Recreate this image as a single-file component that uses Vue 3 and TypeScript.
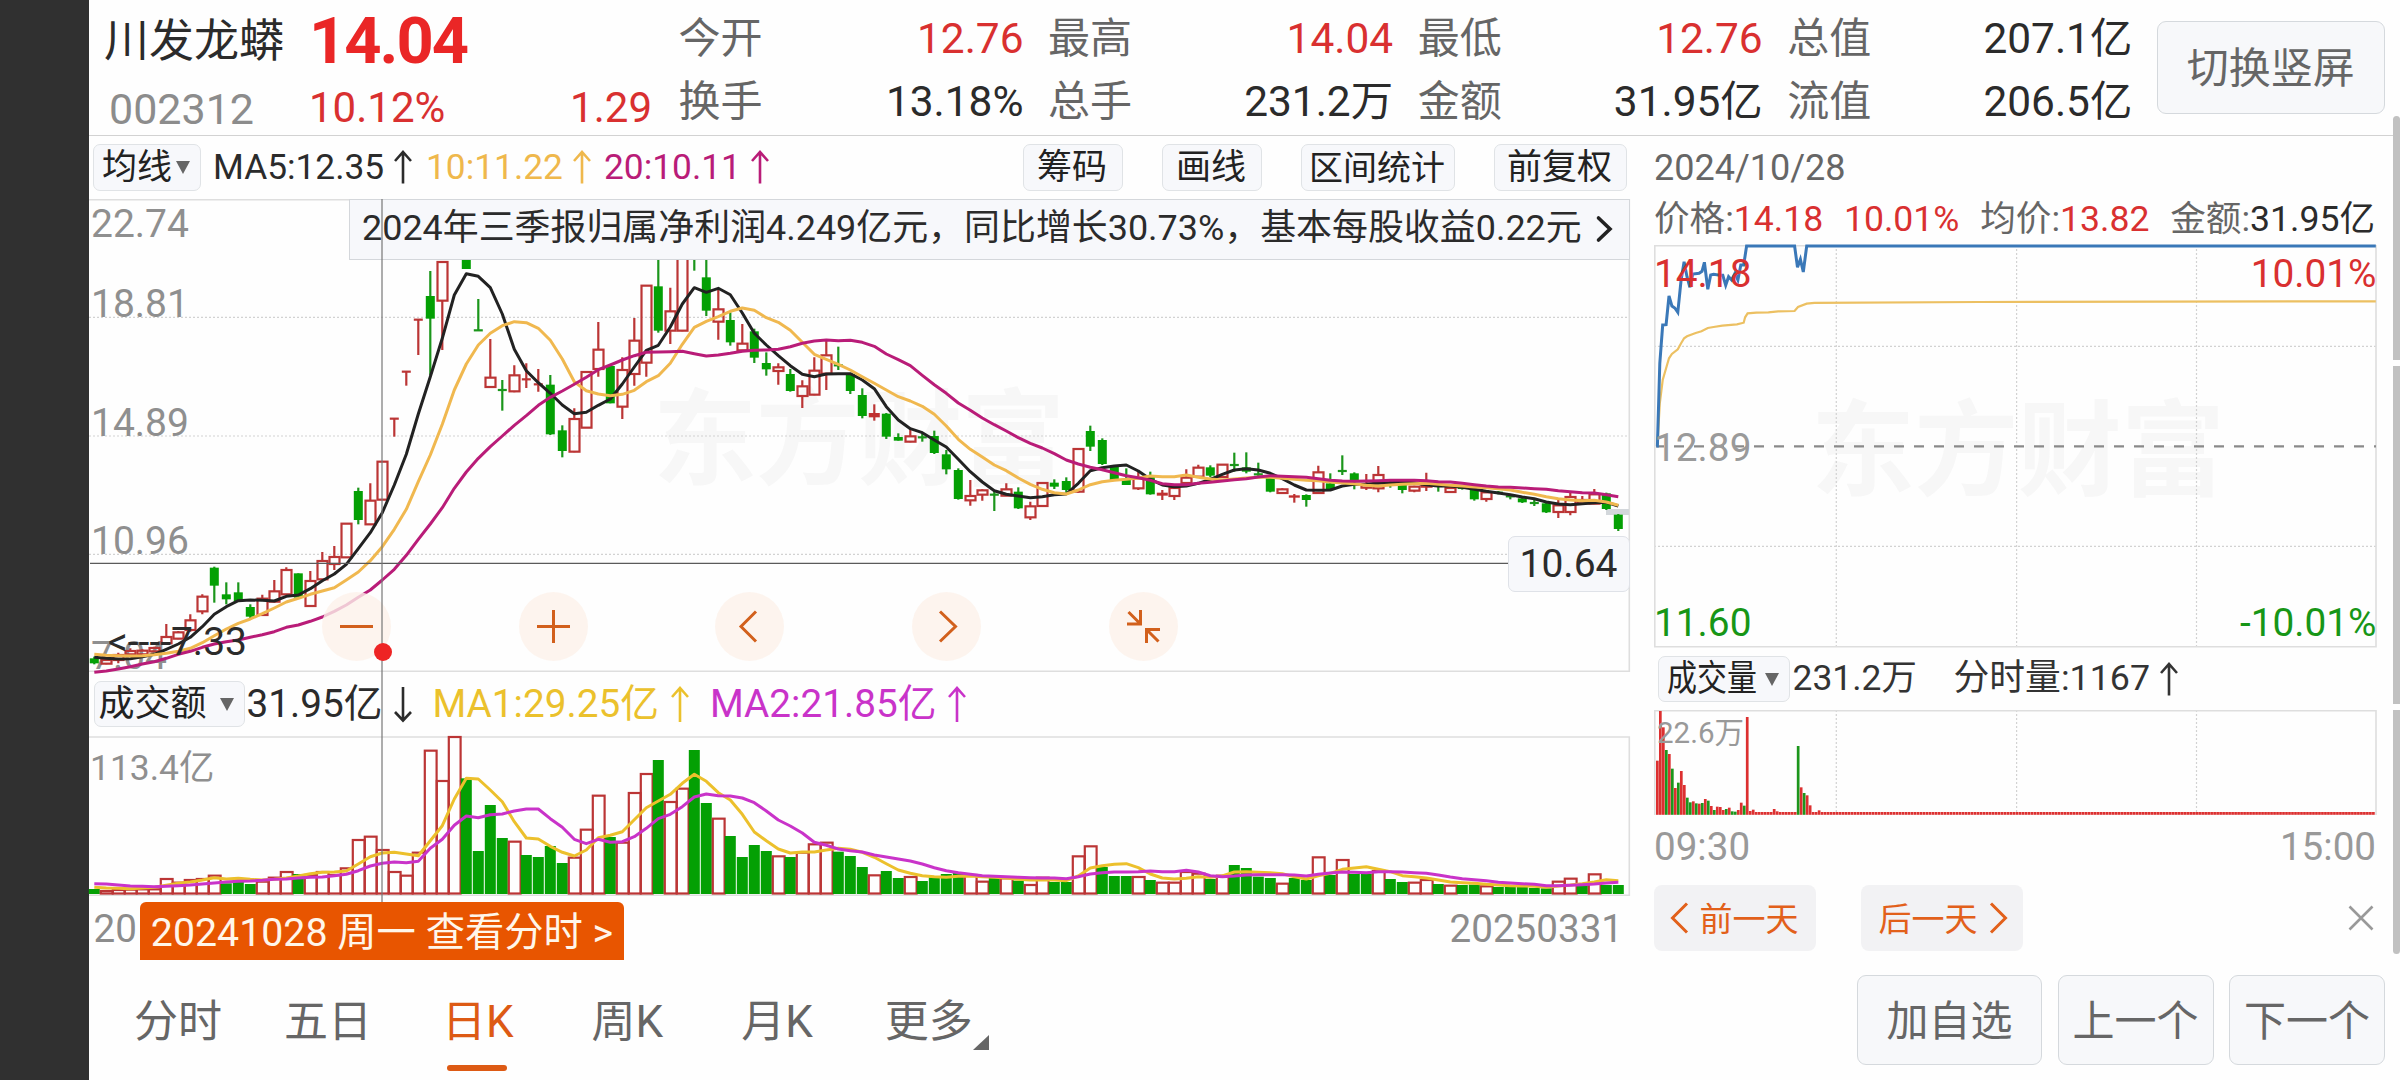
<script setup lang="ts">
type Kind = 'r' | 'g' | 'f'

// kind, high, body top, body bottom, low (thirds of a pixel)
const candleRows = `g 1400 1405 1420 1423|r 1408 1410 1421 1423|r 1388 1395 1410 1420|r 1375 1383 1393 1394|r 1378 1382 1393 1395|r 1370 1374 1384 1386|r 1302 1341 1360 1360|r 1323 1327 1346 1348|r 1273 1291 1320 1325|r 1213 1220 1264 1273|g 1130 1133 1187 1238|g 1177 1213 1228 1243|g 1177 1207 1236 1236|g 1243 1251 1280 1290|r 1214 1226 1275 1277|r 1170 1204 1235 1237|r 1132 1140 1213 1215|g 1150 1150 1223 1223|r 1143 1173 1248 1250|r 1086 1113 1168 1170|r 1068 1101 1122 1140|r 1000 1001 1102 1104|g 893 903 990 1003|r 880 932 1003 1005|r 814 815 929 930|r 686 686 686 740|r 545 545 545 587|r 389 389 389 495|g 243 318 386 555|r 214 216 332 480|r 60 60 120 120|g 120 120 237 237|g 327 421 421 421|r 447 563 591 592|g 570 600 600 662|r 526 556 604 607|r 520 568 568 594|r 537 583 583 605|g 555 584 733 735|g 706 721 783 802|r 655 687 785 787|r 545 546 713 714|r 396 479 537 560|g 528 528 640 640|r 502 540 650 687|r 384 452 552 587|r 286 287 518 560|g 180 289 422 428|r 293 364 422 462|r 120 130 422 424|g 120 150 200 242|g 180 262 362 378|r 300 358 395 449|g 367 390 457 467|r 402 461 481 483|g 416 424 503 519|g 487 519 538 557|r 520 532 543 584|g 537 552 603 605|r 571 589 618 654|r 502 542 614 616|r 451 496 551 600|g 470 526 526 540|g 550 552 603 612|g 595 615 678 685|f 643 669 682 692|g 669 671 740 747|g 730 741 752 752|r 713 739 755 757|g 730 742 742 755|g 722 738 789 792|g 780 793 838 853|g 835 840 927 929|r 870 918 931 947|r 898 901 914 932|g 900 914 914 963|r 880 898 917 918|g 892 905 955 957|r 935 949 982 990|r 878 879 948 950|g 868 878 890 897|g 862 873 900 908|r 776 777 905 908|g 707 723 770 783|g 745 750 822 825|g 825 828 870 870|g 835 868 885 885|r 845 865 895 900|g 845 857 913 914|f 900 908 917 930|r 890 894 918 930|r 838 863 879 885|r 824 833 860 862|g 826 832 857 862|r 822 824 861 862|g 788 825 825 845|g 787 832 845 850|g 818 853 853 860|g 857 860 905 907|r 895 898 909 911|f 912 916 923 938|g 913 915 930 950|r 827 847 909 911|g 850 880 900 903|g 796 843 843 855|g 847 850 872 898|r 852 885 893 900|r 828 855 895 907|g 868 880 880 893|g 883 885 900 910|r 887 890 902 907|r 848 884 890 903|g 885 888 888 905|r 891 894 906 908|g 888 893 897 899|g 898 900 928 932|r 904 907 927 935|g 903 908 908 913|g 912 919 919 928|g 923 925 937 939|g 930 939 939 948|g 938 940 967 969|r 930 946 966 984|r 903 921 966 976|r 918 930 940 942|r 897 913 941 943|g 908 910 957 960|g 972 974 1017 1023`

const nums = (s: string): number[] => s.trim().split(/\s+/).map(Number)
const X0 = 5.3
const STEP = 12
const cx = (i: number): number => X0 + STEP * i

const candles = candleRows.split('|').map((row, i) => {
  const [k, ...v] = row.split(' ')
  const [high, top, bottom, low] = v.map((n) => (Number(n) - 27) / 3)
  return { kind: k as Kind, x: cx(i), high, top, bottom, low, flat: bottom - top < 0.5 }
})

const ma5 = nums(`1402 1405 1407 1406 1400 1393 1378 1362 1342 1310 1273 1250 1232 1230 1231 1233 1219 1215 1196 1172 1152 1123 1076 1028 968 885 793 672 560 445 315 251 259 293
372 478 542 578 610 645 671 667 646 627 582 531 481 466 411 342 293 307 295 314 369 430 465 497 527 553 560 552 551 551 570 596 650 690 716 728 750 771 808 845 876 902 913 918 923 920 914 912
880 842 833 828 825 843 868 885 890 888 880 868 853 840 836 840 850 866 885 900 901 900 888 883 882 880 878 876 878 884 888 888 892 898 904 909 914 921 926 936 942 944 941 938 937 948`)
const ma10 = nums(`1393 1396 1397 1398 1397 1394 1390 1384 1375 1358 1337 1317 1300 1287 1271 1254 1236 1225 1213 1203 1193 1170 1146 1112 1070 1018 958 875 795 703 600 522 465 430
407 395 398 415 451 507 575 602 612 617 613 601 575 557 520 463 412 394 380 364 354 361 383 397 421 457 493 508 523 540 560 580 600 620 633 649 673 708 748 778 801 825 842 864 883 898 908 912
900 884 875 871 868 864 858 860 860 855 862 867 870 867 864 862 862 865 868 871 872 876 879 881 886 888 885 883 881 880 883 886 888 891 893 896 900 907 913 920 926 930 932 931 936 946`)
const ma20 = nums(`1447 1443 1437 1430 1422 1415 1405 1393 1384 1372 1362 1355 1350 1342 1334 1325 1312 1305 1294 1281 1264 1245 1222 1200 1170 1138 1096 1048 1002 953 895 846 805 770
738 706 677 646 622 603 583 562 539 525 510 497 487 486 485 484 491 498 495 490 484 481 480 478 470 460 453 450 452 451 457 469 492 509 527 556 584 610 639 661 684 704 723 743 760 774 791 810
822 832 839 848 857 863 871 881 884 884 880 877 873 869 866 861 857 859 860 862 866 871 873 874 873 872 871 871 871 872 875 876 880 884 888 891 892 894 896 898 902 905 908 909 914 920`)

const volumeRows = `g657 r660 r657 r656 r655 r655 r624 r635 r627 r624 r614 g640 g630 g642 r632 r620 r603 g612 r612 r603 r612 r592 r507 r497 r537 r603 r614 r545 r239 r330 r198 g325 g543 g405 g504 r512 g555 g561 g528 g579 r560 r476 r374 g501 r515 r366 r309 g270 r393 r353 g240 g399 r443 g498 g561 g525 g543 r556 g561 r545 r520 r515 g545 g558 g591 r613 g603 g624 r618 g633 g622 g612 g606 r612 r632 g622 r622 g632 r642 r620 g636 g636 r556 r526 g591 g618 g618 r618 g630 r635 r635 r603 r608 g627 r614 g585 g594 g620 g624 r638 g624 g630 r559 g615 r567 g612 g612 r600 g627 g636 r635 r627 g642 r644 g645 g644 r646 g651 g649 g651 g654 g655 r632 r623 g640 r610 g645 g645`
const volumes = volumeRows.split(' ').map((s, i) => ({
  kind: s[0] as Kind,
  x: cx(i),
  y: (Number(s.slice(1)) - 198) / 3 + 1,
}))
const vma1 = nums(`652 654 655 656 654 652 646 640 636 630 623 627 625 628 630 628 624 618 611 607 606 603 582 560 549 547 552 557 512 467 387 325 327 360 395 455 504 507 529 547 558 540 503 496 485 449 413 393 373 340 313 334 368 390 433 486 512 537 549 546 546 540 535 538 547 562 581 600 610 617 620 622 619 618 620 622 624 628 630 629 630 632 618 594 587 583 581 593 612 624 627 625 620 622 618 606 605 607 608 611 620 627 617 610 598 594 590 598 605 617 620 624 630 636 638 640 643 645 647 648 649 652 648 645 641 636 629 632`)
const vma2 = nums(`641 642 645 648 649 650 649 647 645 642 639 636 634 633 631 628 627 624 622 621 617 613 602 588 580 576 578 574 535 508 466 438 443 434 432 423 417 417 446 472 508 521 508 517 515 500 475 446 433 410 381 372 377 378 384 398 423 450 468 489 517 526 537 542 546 555 561 567 573 582 593 602 608 613 617 619 620 622 623 624 624 626 620 612 608 606 606 605 603 605 605 601 606 617 620 618 615 614 614 614 615 618 613 609 606 607 608 605 605 606 608 610 615 621 626 629 632 637 639 641 643 647 647 646 644 642 639 637`)

const line = (values: number[], base: number, shift = 0): string =>
  values.map((v, i) => `${cx(i).toFixed(1)},${((v - base) / 3 + shift).toFixed(1)}`).join(' ')

// Intraday series: minute offsets are spaced three pixels apart
const MIN = 2.996
const intraday = (pairs: string): string =>
  pairs
    .trim()
    .split(' ')
    .map((p) => {
      const [x, y] = p.split(',').map(Number)
      return `${((x - 29) / 2.063).toFixed(1)},${((y - 45) / 3).toFixed(1)}`
    })
    .join(' ')
const pricePts = intraday(
  '34,648 36,648 41,400 47,285 54,284 60,198 66,228 72,234 78,247 85,150 91,95 97,140 103,172 109,132 122,130 128,124 133,97 140,178 146,135 152,133 165,136 171,136 177,166 183,140 189,150 196,130 202,150 208,105 214,105 220,48 319,48 325,112 331,88 337,126 344,48 1518,48',
)
const avgPts = intraday(
  '36,648 41,520 47,450 54,415 60,385 66,372 78,358 85,340 91,325 97,319 115,309 127,304 140,294 152,291 170,287 200,283 214,278 217,262 222,250 240,248 265,247 285,244 319,243 326,231 344,221 360,218.5 700,216 1518,214',
)
const minuteHead = `r362 r213 r262 g330 r342 g386 r444 g428 r393 r435 g473 g487 r484 g490 r491 g489 r477 g482 r498 g510 r500 r501 r510 g507 r503 g514 g515 r510 r488 g497 r231 r513 r509 r516 r516 r516 r516 r516 r516 r507 r514 r516 r516 r516 r516 r516 r516 g318 r442 g459 r466 r496 r516 r516 r511`.split(' ')
const minuteBars = Array.from({ length: 240 }, (_, i) => {
  const s = minuteHead[i] ?? 'r516'
  const y = (Number(s.slice(1)) - 210) / 3
  return { up: s[0] === 'r', x: 2 + i * MIN, y, h: 104.8 - y }
})

const quotes = [
  [['今开', '12.76', true], ['换手', '13.18%', false]],
  [['最高', '14.04', true], ['总手', '231.2万', false]],
  [['最低', '12.76', true], ['金额', '31.95亿', false]],
  [['总值', '207.1亿', false], ['流值', '206.5亿', false]],
] as [string, string, boolean][][]
const axis = [
  ['22.74', 37.9],
  ['18.81', 118],
  ['14.89', 237],
  ['10.96', 355],
  ['7.04', 470],
] as [string, number][]
</script>

<template>
  <div class="screen">
    <div class="notch"></div>
    <div class="app">
      <header class="header">
        <div class="stock">
          <div class="stock-id">
            <span class="name">川发龙蟒</span>
            <span class="code">002312</span>
          </div>
          <div class="stock-price">
            <span class="last">14.04</span>
            <div class="chg"><span>10.12%</span><span>1.29</span></div>
          </div>
        </div>
        <div class="quotes">
          <div v-for="(col, c) in quotes" :key="c" class="qcol">
            <div v-for="q in col" :key="q[0]" class="q">
              <span class="ql">{{ q[0] }}</span>
              <span :class="['qv', { up: q[2] }]">{{ q[1] }}</span>
            </div>
          </div>
        </div>
        <div class="btn rotate">切换竖屏</div>
      </header>

      <div class="body">
        <section class="left">
          <div class="bar ma-bar">
            <div class="chip ma-chip">均线<i class="tri"></i></div>
            <span class="ma k">MA5:12.35<svg class="arr" viewBox="0 0 18 34"><path d="M9 33.500V2M1 11 9 2l8 9" /></svg></span>
            <span class="ma y">10:11.22<svg class="arr" viewBox="0 0 18 34"><path d="M9 33.500V2M1 11 9 2l8 9" /></svg></span>
            <span class="ma m">20:10.11<svg class="arr" viewBox="0 0 18 34"><path d="M9 33.500V2M1 11 9 2l8 9" /></svg></span>
            <div class="chips">
              <div class="chip c2">筹码</div>
              <div class="chip c2">画线</div>
              <div class="chip c4">区间统计</div>
              <div class="chip c3">前复权</div>
            </div>
          </div>

          <div class="kchart">
            <svg width="1541" height="473" viewBox="0 0 1541 473">
              <text class="mark" x="564" y="278" textLength="412">东方财富</text>
              <g class="dots">
                <path d="M0 118.300H1541M0 237H1541M0 355.300H1541" />
              </g>
              <path class="frame" d="M0 .8H1540.300V472.300H0" />
              <path d="M1517 313h23" stroke="#d3d7db" stroke-width="6" />
              <text v-for="a in axis" :key="a[0]" class="axis" x="2" :y="a[1]">{{ a[0] }}</text>
              <g v-for="(c, i) in candles" :key="i">
                <template v-if="c.kind === 'r'">
                  <path class="red" :d="`M${c.x} ${c.high}V${c.top}M${c.x} ${c.bottom}V${c.low}`" />
                  <path v-if="c.flat" class="red" :d="`M${c.x - 4.500} ${c.top}h9`" />
                  <rect v-else class="red" :x="c.x - 4.800" :y="c.top" width="10" :height="c.bottom - c.top" />
                </template>
                <template v-else>
                  <path :class="c.kind === 'f' ? 'red' : 'green'" :d="`M${c.x} ${c.high}V${c.low}`" />
                  <path v-if="c.flat" class="green" :d="`M${c.x - 4.500} ${c.top}h9`" />
                  <rect v-else :fill="c.kind === 'f' ? '#c03030' : '#04a004'" :x="c.x - (c.kind === 'f' ? 5.500 : 4.500)" :y="c.top" :width="c.kind === 'f' ? 11 : 9" :height="c.bottom - c.top" />
                </template>
              </g>
              <polyline class="ln" stroke="#222" :points="line(ma5, 27)" />
              <polyline class="ln" stroke="#f0b84f" :points="line(ma10, 27)" />
              <polyline class="ln" stroke="#b91c78" :points="line(ma20, 27)" />
              <text class="low" x="19" y="456">&lt;----7.33</text>
              <path d="M1 364.400H1420" stroke="#5a5a5a" stroke-width="1.200" />
            </svg>
            <div class="news">
              <span>2024年三季报归属净利润4.249亿元，同比增长30.73%，基本每股收益0.22元</span>
              <svg width="18" height="28" viewBox="0 0 18 28"><path d="M2.500 3 14 14 2.500 25" fill="none" stroke="#222" stroke-width="3.600" stroke-linecap="round" /></svg>
            </div>
            <div class="tag">10.64</div>
            <div class="tools">
              <div class="tool"><svg viewBox="0 0 69 69"><path d="M18 34.500H51" /></svg></div>
              <div class="tool"><svg viewBox="0 0 69 69"><path d="M18 34.500H51M34.500 18V51" /></svg></div>
              <div class="tool"><svg viewBox="0 0 69 69"><path d="M41 19.500 26 34.500 41 49.500" /></svg></div>
              <div class="tool"><svg viewBox="0 0 69 69"><path d="M28 19.500 43.500 34.500 28 49.500" /></svg></div>
              <div class="tool"><svg viewBox="0 0 69 69"><path d="M19.500 20 31 31.500M18 32H31.500V18M49.500 49.500 38 38M37.500 51V37.500H51" /></svg></div>
            </div>
            <div class="crosshair"></div>
            <div class="dot"></div>
          </div>

          <div class="bar vol-bar">
            <div class="chip vol-chip">成交额<i class="tri"></i></div>
            <span class="vm k">31.95亿<svg class="arr" viewBox="0 0 18 36"><path d="M9 1V34M1 26 9 34.500l8-8.500" /></svg></span>
            <span class="vm vy">MA1:29.25亿<svg class="arr" viewBox="0 0 18 36"><path d="M9 36V2M1 11 9 2l8 9" /></svg></span>
            <span class="vm vp">MA2:21.85亿<svg class="arr" viewBox="0 0 18 36"><path d="M9 36V2M1 11 9 2l8 9" /></svg></span>
          </div>

          <svg class="vchart" width="1541" height="160" viewBox="0 0 1541 160">
            <path class="frame" d="M0 1H1540.300V159.300H0" />
            <text class="axis2" x="1" y="43.500">113.4亿</text>
            <template v-for="(v, i) in volumes" :key="i">
              <rect v-if="v.kind === 'g'" fill="#04a004" :x="v.x - 5.500" :y="v.y - 1" width="11" :height="159 - v.y" />
              <rect v-else class="red" :x="v.x - 5.500" :y="v.y" width="11.800" :height="157.500 - v.y" />
            </template>
            <polyline class="ln" stroke="#ecc02c" :points="line(vma1, 198)" />
            <polyline class="ln" stroke="#c933c9" :points="line(vma2, 198)" />
          </svg>

          <div class="dates">
            <span>20</span>
            <span>20250331</span>
            <div class="view-day">20241028 周一 查看分时 &gt;</div>
          </div>
        </section>

        <section class="right">
          <div class="rdate">2024/10/28</div>
          <div class="rline">
            <span>价格:<b>14.18</b></span>
            <b>10.01%</b>
            <span>均价:<b>13.82</b></span>
            <span>金额:<em>31.95亿</em></span>
          </div>
          <svg class="pchart" width="723" height="403" viewBox="0 0 723 403">
            <text class="mark" x="157" y="287" textLength="0"></text>
            <text class="mark" x="157" y="243" textLength="414">东方财富</text>
            <g class="dots">
              <path d="M0 101.300H722M0 301.300H722M182.300 0V402M362.600 0V402M542.500 0V402" />
            </g>
            <path class="frame" d="M.8 .8H722V401.800H.8Z" />
            <path d="M2 201.400H722" stroke="#8a8a8a" stroke-width="2.400" stroke-dasharray="10 10" stroke-dashoffset="2" />
            <polyline :points="avgPts" fill="none" stroke="#ecc062" stroke-width="2.200" />
            <polyline :points="pricePts" fill="none" stroke="#3a78b8" stroke-width="3" />
            <g class="pl">
              <text x="0" y="41.700" fill="#d93030">14.18</text>
              <text x="722.500" y="41.700" fill="#d93030" text-anchor="end">10.01%</text>
              <text x="0" y="215.700" fill="#9a9a9a">12.89</text>
              <text x="0" y="390.700" fill="#179617">11.60</text>
              <text x="722.500" y="390.700" fill="#179617" text-anchor="end">-10.01%</text>
            </g>
          </svg>
          <div class="rvol">
            <div class="chip rv-chip"><span>成交量</span><i class="tri"></i></div>
            <span class="rv1">231.2万</span>
            <span class="rv2">分时量:1167<svg class="arr" viewBox="0 0 18 34"><path d="M9 33.500V2M1 11 9 2l8 9" /></svg></span>
          </div>
          <svg class="mchart" width="723" height="106" viewBox="0 0 723 106">
            <g class="dots"><path d="M182.300 0V104M362.600 0V104M542.500 0V104" /></g>
            <path class="frame" d="M.8 105V.8H722V105" />
            <rect v-for="(b, i) in minuteBars" :key="i" :x="b.x" :y="b.y" width="2.700" :height="b.h" :fill="b.up ? '#dc3030' : '#1c961c'" />
            <text x="3" y="32.500" class="vmax">22.6万</text>
          </svg>
          <div class="times"><span>09:30</span><span>15:00</span></div>
          <div class="days">
            <div class="day"><svg width="19" height="32" viewBox="0 0 19 32"><path d="M17 1.500 2.500 16 17 30.500" /></svg><span>前一天</span></div>
            <div class="day next"><span>后一天</span><svg width="19" height="32" viewBox="0 0 19 32"><path d="M2 1.500 16.500 16 2 30.500" /></svg></div>
            <svg class="close" width="26" height="26" viewBox="0 0 26 26"><path d="M1.500 1.500 24.500 24.500M24.500 1.500 1.500 24.500" /></svg>
          </div>
        </section>
      </div>

      <footer class="footer">
        <nav class="tabs">
          <span class="tab t1">分时</span>
          <span class="tab t2">五日</span>
          <span class="tab t3 on">日K</span>
          <span class="tab t4">周K</span>
          <span class="tab t5">月K</span>
          <span class="tab t6">更多<i></i></span>
        </nav>
        <div class="actions">
          <div class="btn wide">加自选</div>
          <div class="btn">上一个</div>
          <div class="btn">下一个</div>
        </div>
      </footer>
      <div class="scroll"><i></i><i></i><i></i></div>
    </div>
  </div>
</template>

<style>
body {
  margin: 0;
  background: #fefefe;
}
</style>

<style scoped>
.screen {
  display: flex;
  width: 2400px;
  height: 1080px;
  overflow: hidden;
  background: #fefefe;
  color: #2b2b2b;
  font-family: Roboto, 'Noto Sans CJK SC', sans-serif;
  font-size: 35px;
  line-height: 1;
  white-space: nowrap;
}
.screen * {
  box-sizing: border-box;
}
.notch {
  width: 89px;
  background: #303030;
}
.app {
  position: relative;
  flex: 1;
  display: flex;
  flex-direction: column;
}
.header {
  display: flex;
  height: 136px;
  border-bottom: 1px solid #d2d2d2;
  font-size: 42px;
}
.stock {
  display: flex;
  width: 589.5px;
  padding-left: 15px;
}
.stock-id {
  display: flex;
  flex-direction: column;
  width: 205px;
}
.name {
  height: 84px;
  line-height: 84px;
  font-size: 45px;
}
.code {
  height: 50px;
  line-height: 50px;
  padding-left: 5px;
  color: #8c8c8c;
  font-size: 43px;
}
.stock-price {
  width: 343px;
  color: #d93030;
}
.last {
  display: block;
  height: 83px;
  line-height: 83px;
  font-size: 65px;
  font-weight: 700;
  letter-spacing: -2px;
  color: #ea2626;
}
.chg {
  display: flex;
  justify-content: space-between;
  height: 48px;
  line-height: 49px;
}
.quotes {
  display: flex;
  gap: 24.6px;
}
.qcol {
  width: 345px;
  padding-top: 7px;
}
.q {
  display: flex;
  justify-content: space-between;
  height: 63px;
  line-height: 63px;
}
.ql {
  color: #666;
}
.qv {
  font-size: 42.4px;
}
.qv.up {
  color: #d93030;
}
.btn {
  display: flex;
  align-items: center;
  justify-content: center;
  width: 156px;
  height: 90px;
  padding-top: 3px;
  border: 1.5px solid #d5d9dd;
  border-radius: 9px;
  background: #f7f8fa;
  color: #666;
  font-size: 42px;
}
.rotate {
  width: 228px;
  height: 93px;
  margin: 21px 0 0 24.6px;
}
.body {
  display: flex;
  height: 829px;
}
.left {
  width: 1541px;
}
.bar {
  display: flex;
  align-items: center;
}
.ma-bar {
  height: 63px;
  padding-left: 4px;
  font-size: 35.3px;
}
.chip {
  display: flex;
  align-items: center;
  justify-content: center;
  height: 47px;
  padding-right: 2px;
  border: 1.5px solid #e0e3e6;
  border-radius: 7px;
  background: #f7f8fb;
  color: #222;
  font-size: 35px;
}
.ma-chip {
  width: 108px;
  gap: 4px;
}
.tri {
  width: 0;
  height: 0;
  border: 7px solid transparent;
  border-top: 13px solid #666;
  border-bottom: 0;
}
.arr {
  width: 18px;
  height: 34px;
  margin-left: 10px;
  fill: none;
  stroke: currentColor;
  stroke-width: 2.6;
}
.ma {
  display: flex;
  align-items: center;
}
.ma.k {
  width: 213px;
  margin-left: 12px;
}
.ma.y {
  width: 178px;
}
.k {
  color: #2b2b2b;
}
.y {
  color: #efb84c;
}
.m {
  color: #b91c78;
}
.chips {
  display: flex;
  gap: 39px;
  margin-left: auto;
  margin-right: 3px;
}
.c2 {
  width: 100px;
}
.c4 {
  width: 154px;
  font-size: 34px;
}
.c3 {
  width: 133px;
}
.kchart {
  position: relative;
  height: 473px;
}
svg {
  display: block;
  overflow: visible;
}
.frame {
  fill: none;
  stroke: #dedede;
  stroke-width: 1.6;
}
.dots {
  fill: none;
  stroke: #d2d2d2;
  stroke-width: 1.2;
  stroke-dasharray: 2 2;
}
.mark {
  font: 700 104px 'Noto Sans CJK SC', sans-serif;
  fill: #f7f7f7;
}
.axis {
  font-size: 39px;
  fill: #8f8f8f;
}
.axis2 {
  font-size: 35.4px;
  fill: #8f8f8f;
}
.low {
  font-size: 39px;
  fill: #2b2b2b;
}
.red {
  fill: none;
  stroke: #bb3535;
  stroke-width: 2.2;
}
.green {
  fill: none;
  stroke: #1b961b;
  stroke-width: 2.2;
}
.ln {
  fill: none;
  stroke-width: 3;
  stroke-linejoin: round;
}
.news {
  position: absolute;
  left: 260px;
  top: 0;
  display: flex;
  align-items: center;
  gap: 14px;
  width: 1281px;
  height: 61px;
  padding: 0 0 2px 12px;
  border: 1.5px solid #d4d7db;
  background: #f7f8fb;
  font-size: 35.93px;
  color: #2b2b2b;
}
.tag {
  position: absolute;
  left: 1418.500px;
  top: 337px;
  width: 122px;
  height: 56px;
  border: 1.5px solid #dfe2e8;
  border-radius: 7px;
  background: #f7f8fb;
  font-size: 39px;
  line-height: 54px;
  text-align: center;
}
.tools {
  position: absolute;
  left: 233px;
  top: 393px;
  display: flex;
  gap: 127.7px;
}
.tool {
  width: 69px;
  height: 69px;
  border-radius: 50%;
  background: #fdf1eacc;
}
.tool path {
  fill: none;
  stroke: #d2601c;
  stroke-width: 3;
}
.crosshair {
  position: absolute;
  left: 292px;
  top: 0;
  width: 2px;
  height: 703px;
  background: #777;
  opacity: 0.6;
}
.dot {
  position: absolute;
  left: 284.500px;
  top: 443.500px;
  width: 18px;
  height: 18px;
  border-radius: 50%;
  background: #ee2424;
}
.vol-bar {
  height: 64px;
  padding-left: 4.500px;
  font-size: 38.7px;
}
.vol-chip {
  width: 151px;
  height: 46px;
  gap: 13px;
  padding-right: 6px;
  font-size: 36px;
}
.vm {
  display: flex;
  align-items: center;
}
.vm .arr {
  height: 36px;
  margin-left: 12px;
}
.vm.k {
  width: 186px;
  margin-left: 2px;
}
.vm.vy {
  width: 277.500px;
  color: #ebc12c;
}
.vm.vp {
  color: #c933c9;
}
.dates {
  position: relative;
  display: flex;
  justify-content: space-between;
  height: 69px;
  padding: 0 7px 0 4.500px;
  color: #8c8c8c;
  font-size: 38.6px;
  line-height: 66px;
}
.view-day {
  position: absolute;
  left: 51px;
  top: 6px;
  width: 484px;
  height: 58px;
  border-radius: 6px 6px 0 0;
  background: #e85500;
  color: #fff6ea;
  font-size: 39.3px;
  line-height: 62px;
  text-align: center;
}
.right {
  margin-left: 24px;
  width: 723px;
}
.rdate {
  height: 64px;
  line-height: 65px;
  color: #666;
  font-size: 36px;
}
.rline {
  display: flex;
  justify-content: space-between;
  height: 45px;
  padding: 0 2px 0 0;
  line-height: 39px;
  color: #666;
  font-size: 35.6px;
}
.rline b {
  font-weight: 400;
  color: #d93030;
}
.rline em {
  font-style: normal;
  color: #2b2b2b;
}
.pl text {
  font-size: 38.8px;
}
.rvol {
  display: flex;
  align-items: center;
  height: 62px;
  padding-left: 3.500px;
  color: #333;
}
.rv-chip {
  width: 132px;
  height: 46px;
  gap: 8px;
}
.rv-chip span {
  width: 90px;
  font-size: 36px;
  transform: scaleX(0.833);
  transform-origin: 0 50%;
}
.rv1 {
  width: 161px;
  margin-left: 3px;
  font-size: 35.4px;
}
.rv2 {
  display: flex;
  align-items: center;
  font-size: 35.8px;
}
.vmax {
  font-size: 29.5px;
  fill: #999;
}
.times {
  display: flex;
  justify-content: space-between;
  padding: 0 1px 0 0;
  height: 69px;
  line-height: 62px;
  color: #999;
  font-size: 38.6px;
}
.days {
  display: flex;
  align-items: center;
}
.day {
  display: flex;
  align-items: center;
  justify-content: center;
  gap: 11px;
  width: 162px;
  height: 66px;
  padding-right: 2px;
  border-radius: 8px;
  background: #f2f2f4;
  color: #e2601a;
  font-size: 33px;
}
.day span {
  padding-top: 2px;
}
.next {
  margin-left: 45px;
  padding: 0 0 0 2px;
}
.day path {
  fill: none;
  stroke: currentColor;
  stroke-width: 3;
}
.close {
  margin-left: auto;
  margin-right: 3px;
}
.close path {
  stroke: #999;
  stroke-width: 2.6;
}
.footer {
  display: flex;
  justify-content: space-between;
  padding: 10px 15px 0 45px;
}
.tabs {
  display: flex;
  color: #666;
  font-size: 44px;
  line-height: 94px;
}
.tab {
  position: relative;
  height: 92px;
}
.t2 {
  margin-left: 62px;
}
.t3 {
  margin-left: 70px;
}
.t4,
.t5 {
  margin-left: 78px;
}
.t6 {
  margin-left: 72px;
}
.on {
  color: #dd5a14;
}
.on::after {
  content: '';
  position: absolute;
  left: 5px;
  bottom: -4px;
  width: 60px;
  height: 6px;
  border-radius: 3px;
  background: #dd5a14;
}
.t6 i {
  position: absolute;
  right: -16px;
  top: 60px;
  border-left: 16px solid transparent;
  border-bottom: 15px solid #666;
}
.actions {
  display: flex;
  gap: 15.5px;
}
.wide {
  width: 185px;
}
.scroll {
  position: absolute;
  right: 0;
  top: 116px;
  display: flex;
  flex-direction: column;
  gap: 6px;
  width: 7px;
}
.scroll i {
  height: 244px;
  background: #c1c1c1;
}
.scroll i:first-child {
  border-radius: 4px 4px 0 0;
}
.scroll i:nth-child(2) {
  height: 338px;
}
.scroll i:last-child {
  border-radius: 0 0 4px 4px;
}
</style>
